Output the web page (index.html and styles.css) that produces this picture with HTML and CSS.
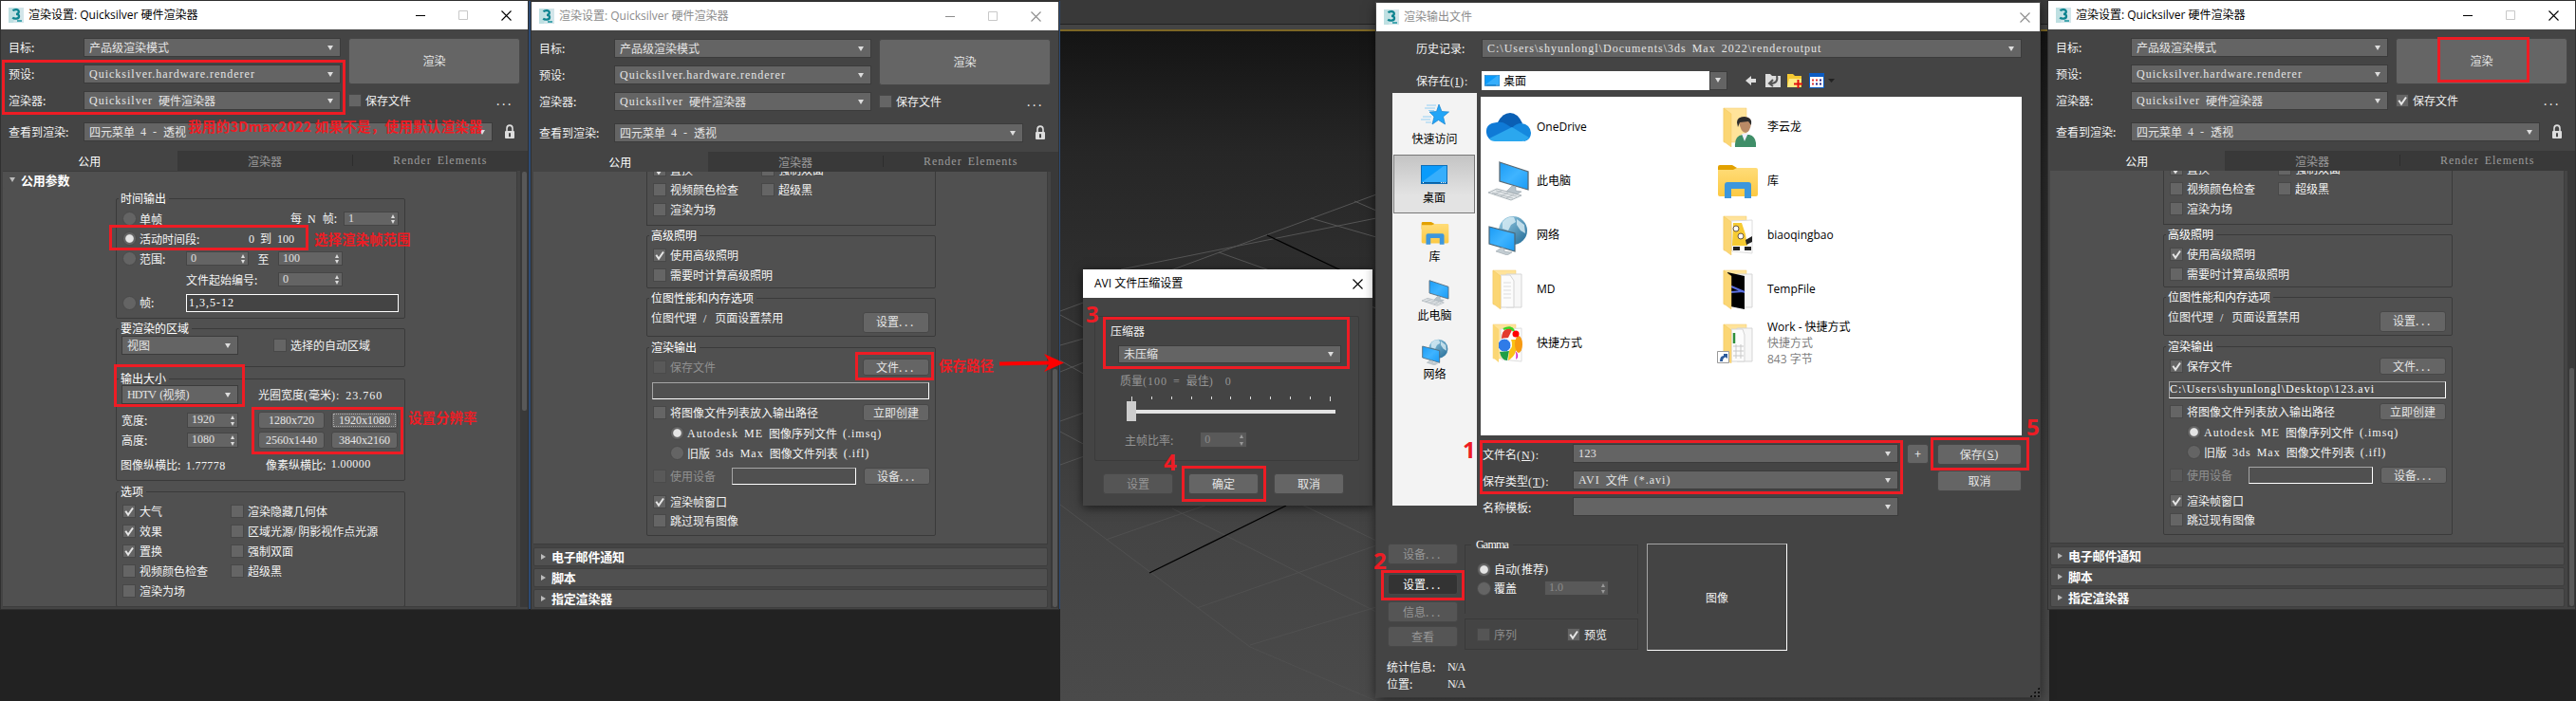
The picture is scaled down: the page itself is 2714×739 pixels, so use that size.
FILE: index.html
```html
<!DOCTYPE html>
<html lang="zh-CN">
<head>
<meta charset="utf-8">
<title>渲染设置</title>
<link rel="stylesheet" href="styles.css">
</head>
<body>
<svg class="defs" width="0" height="0" aria-hidden="true">
  <defs>
    <linearGradient id="scr" x1="0" y1="0" x2="1" y2="1"><stop offset="0" stop-color="#1a9bf5"/><stop offset=".5" stop-color="#3fb4ff"/><stop offset="1" stop-color="#1a9bf5"/></linearGradient>
    <linearGradient id="fold" x1="0" y1="0" x2="0" y2="1"><stop offset="0" stop-color="#ffdc78"/><stop offset="1" stop-color="#fcc943"/></linearGradient>
    <linearGradient id="globe" x1="0" y1="0" x2="1" y2="1"><stop offset="0" stop-color="#9fd0e6"/><stop offset="1" stop-color="#1f6a96"/></linearGradient>
    <symbol id="app" viewBox="0 0 16 16"><rect width="16" height="16" fill="#d3e6ea"/><path d="M0 0h9L5 16H0z" fill="#bfe0e2"/><path d="M4.5 3.2C6 1.6 10.6 1.4 10.8 4.2 10.9 6 9.300 6.700 8 6.800M8 6.800c2 .1 3.300 1 3 2.700-.3 2.600-5 2.500-6.800 1.100" fill="none" stroke="#0e8490" stroke-width="2.300"/><path d="M9 14h5" stroke="#19929c" stroke-width="1.500"/></symbol>
    <symbol id="lock" viewBox="0 0 12 16"><path d="M3 8V4.500a3 3.400 0 0 1 6 0V8" fill="none" stroke="#ddd" stroke-width="1.600"/><rect x="1" y="7" width="10" height="8" rx="1" fill="#ddd"/><path d="M6 9.200v4" stroke="#333" stroke-width="1.800"/></symbol>
    <symbol id="min" viewBox="0 0 10 10"><path d="M0 5.500h10" stroke="currentColor"/></symbol>
    <symbol id="max" viewBox="0 0 10 10"><path d="M.5.5h9v9h-9z" fill="none" stroke="#c8c8c8"/></symbol>
    <symbol id="close" viewBox="0 0 11 11"><path d="M.5.5l10 10M10.500.5l-10 10" stroke="currentColor" stroke-width="1.100"/></symbol>
    <symbol id="desktop" viewBox="0 0 28 20"><rect x=".5" y=".5" width="27" height="19" fill="#0a9bfb" stroke="#0f6fb8"/><path d="M1 18 24 1h3v17z" fill="#36aefc"/><path d="M1 18.500h26" stroke="#0a5f9f"/><path d="M2 18.500h1M21 18.500h5" stroke="#fff" stroke-dasharray="1 1"/></symbol>
    <symbol id="star" viewBox="0 0 30 24"><path d="m19 1 3 7.500 7.500.5-6 5 2 8-7-4.500L12 22l2-8-5-5 7.500-.5z" fill="#22a5f7" stroke="#1582d0" stroke-width=".7"/><path d="M6 2h10M4 5h11M8 7.500h6M2 14h9M0 17h10M5 20h6" stroke="#7cc6f5" stroke-width=".8"/></symbol>
    <symbol id="library" viewBox="0 0 44 36"><path d="M1 3q0-2 2-2h13l5 3v8H1z" fill="#e2a100"/><path d="M1 6h16l4-2h20q2 0 2 2v26q0 2-2 2H3q-2 0-2-2z" fill="url(#fold)"/><path d="M8 36V22q0-3 3-3h22q3 0 3 3v14h-7V26H15v10z" fill="#3d97dc"/></symbol>
    <symbol id="pc" viewBox="0 0 44 42"><path d="m13 1 30 10v19L13 21z" fill="url(#scr)" stroke="#596a76" stroke-width="1.300"/><path d="m26 26 4 1v4l6 1-5 3-11-3z" fill="#b9c4cb" stroke="#8a979f" stroke-width=".5"/><path d="m1 33 9-4 26 7-11 5z" fill="#e3e7e9" stroke="#9ba5ab" stroke-width=".8"/><path d="m5 33 22 6M9 31l22 6M7 35l8-4M14 37l8-4M20 39l8-4" stroke="#a7b0b6" stroke-width=".7"/></symbol>
    <symbol id="net" viewBox="0 0 42 42"><circle cx="26" cy="16" r="15" fill="url(#globe)"/><path d="M15 7q5-6 12-5l2 5-5 3-3 6-6-2zM30 4l8 6 1 9-5-3-4-6z" fill="#d9eef5" opacity=".8"/><path d="m1 12 27 7v19L1 30z" fill="url(#scr)" stroke="#4d6675" stroke-width="1.200"/><path d="m14 34 3 1v3l8 1-5 3-12-4z" fill="#c2ccd2" stroke="#8a979f" stroke-width=".5"/></symbol>
    <symbol id="cloud" viewBox="0 0 48 32"><path d="M13 11Q18 1 26 1t13 11L28 20z" fill="#0a5fb4"/><path d="M9 31A10 10 0 0 1 1 22Q0 12 12 11q6-1 10 2l8 5L6 30z" fill="#0f7ad6"/><path d="M28 17q4-5 10-5 9 1 10 10 0 7-7 9z" fill="#1488de"/><path d="m4 28 24-12 18 11q-3 4-8 4H10q-4 0-6-3z" fill="#2ba7ee"/></symbol>
    <symbol id="fback" viewBox="0 0 36 42"><path d="M2 1h24v36H2z" fill="#ffe39a" stroke="#f2cb6c" stroke-width=".5"/></symbol>
    <symbol id="ffront" viewBox="0 0 36 42"><path d="m2 1 8 6v35l-8-6z" fill="#fbd674" stroke="#f0c45c" stroke-width=".5"/></symbol>
    <symbol id="tick" viewBox="0 0 12 12"><path d="m2.300 5.800 2.700 4L10 2.500" fill="none" stroke="#e6e6e6" stroke-width="2"/></symbol>
  </defs>
</svg>

<main class="desktop">
  <svg class="viewport" width="1042" height="739" viewBox="0 0 1042 739">
    <g fill="none" stroke="#555" stroke-width="1">
      <path d="M0 328 333 205M64 284 333 230M0 364 28 356M0 392 25 382M0 444 28 434M0 490 28 480"/>
      <path d="M167 266 333 325M264 230 333 250M310 212 333 222M0 332 24 345M0 380 28 396M0 455 28 470"/>
      <path d="M48 569 190 520M144 641 333 575M200 680 333 640M0 532 200 682 333 739M118 536 333 645M230 520 333 570" stroke="#505050"/>
    </g>
    <path d="m218 248 80 38M94 604 238 533" stroke="#000" stroke-width="1.300"/>
  </svg>

  <!-- Window 1: common parameters -->
  <section class="win win-a">
    <header class="title"><svg class="app"><use href="#app"/></svg><h1>渲染设置: Quicksilver 硬件渲染器</h1><span class="ctl"><svg><use href="#min"/></svg><svg><use href="#max"/></svg><svg class="x"><use href="#close"/></svg></span></header>
    <div class="form">
      <label>目标:</label><div class="combo">产品级渲染模式</div><button class="btn render">渲染</button>
      <label>预设:</label><div class="combo en">Quicksilver.hardware.renderer</div>
      <label>渲染器:</label><div class="combo"><span class="en">Quicksilver&nbsp;</span>硬件渲染器</div><div class="save"><i class="box"></i>保存文件<span class="dots">...</span></div>
    </div>
    <div class="view"><label>查看到渲染:</label><div class="combo">四元菜单<span class="en">&nbsp;4&nbsp;-&nbsp;</span>透视</div><svg class="lock"><use href="#lock"/></svg></div>
    <nav class="tabs"><span class="on">公用</span><span>渲染器</span><span class="en">Render Elements</span></nav>
    <div class="content">
      <div class="panes">
        <div class="pane first">
          <div class="roll open"><b>公用参数</b><i class="grip"></i></div>
          <div class="group g-time">
            <h2>时间输出</h2>
            <div class="row"><i class="radio"></i>单帧<span class="push">每<span class="en"> N </span>帧:</span><div class="spin w57">1</div></div>
            <div class="row"><i class="radio sel"></i>活动时间段:<span class="push range"><span class="en">0 </span>到<span class="en"> 100</span></span></div>
            <div class="row"><span class="lead"><i class="radio"></i>范围:</span><div class="spin w66">0</div><span class="to">至</span><div class="spin w68">100</div></div>
            <div class="row r23"><span class="lead"></span><span class="start">文件起始编号:</span><div class="spin w68">0</div></div>
            <div class="row r26"><span class="lead"><i class="radio"></i>帧:</span><div class="input dark w224 en">1,3,5-12</div></div>
          </div>
          <div class="group g-area">
            <h2>要渲染的区域</h2>
            <div class="row r20"><div class="combo w123">视图</div><span class="auto"><i class="box"></i>选择的自动区域</span></div>
          </div>
          <div class="group g-size">
            <h2>输出大小</h2>
            <div class="row r20"><div class="combo w123"><span class="en caps">HDTV&nbsp;(</span>视频<span class="en">)</span></div><span class="gap21">光圈宽度<span class="en">(</span>毫米<span class="en">): 23.760</span></span></div>
            <div class="row r18 mt8"><span class="dim">宽度:</span><div class="spin w54">1920</div><button class="btn res gap21">1280x720</button><button class="btn res focus">1920x1080</button></div>
            <div class="row r18 mt3"><span class="dim">高度:</span><div class="spin w54">1080</div><button class="btn res gap21">2560x1440</button><button class="btn res">3840x2160</button></div>
            <div class="row r18 mt8"><span class="aspect">图像纵横比:<span class="en dig"> 1.77778</span></span><span class="pixel">像素纵横比:<span class="en dig up"> 1.00000</span></span></div>
          </div>
          <div class="group g-opt">
            <h2>选项</h2>
            <div class="row"><span class="col1"><i class="box"><svg><use href="#tick"/></svg></i>大气</span><i class="box"></i>渲染隐藏几何体</div>
            <div class="row"><span class="col1"><i class="box"><svg><use href="#tick"/></svg></i>效果</span><i class="box"></i>区域光源<span class="en slash">/</span>阴影视作点光源</div>
            <div class="row"><span class="col1"><i class="box"><svg><use href="#tick"/></svg></i>置换</span><i class="box"></i>强制双面</div>
            <div class="row"><span class="col1"><i class="box"></i>视频颜色检查</span><i class="box"></i>超级黑</div>
            <div class="row"><i class="box"></i>渲染为场</div>
          </div>
        </div>
      </div>
      <div class="scroll"><i class="thumb top"></i></div>
    </div>
  </section>

  <!-- Window 2: render output, inactive -->
  <section class="win win-b">
    <header class="title idle"><svg class="app"><use href="#app"/></svg><h1>渲染设置: Quicksilver 硬件渲染器</h1><span class="ctl"><svg><use href="#min"/></svg><svg><use href="#max"/></svg><svg class="x"><use href="#close"/></svg></span></header>
    <div class="form">
      <label>目标:</label><div class="combo">产品级渲染模式</div><button class="btn render">渲染</button>
      <label>预设:</label><div class="combo en">Quicksilver.hardware.renderer</div>
      <label>渲染器:</label><div class="combo"><span class="en">Quicksilver&nbsp;</span>硬件渲染器</div><div class="save"><i class="box"></i>保存文件<span class="dots">...</span></div>
    </div>
    <div class="view"><label>查看到渲染:</label><div class="combo">四元菜单<span class="en">&nbsp;4&nbsp;-&nbsp;</span>透视</div><svg class="lock"><use href="#lock"/></svg></div>
    <nav class="tabs"><span class="on">公用</span><span>渲染器</span><span class="en">Render Elements</span></nav>
    <div class="content">
      <div class="panes">
        <div class="pane">
          <div class="group g-cut">
            <div class="row"><span class="col1"><i class="box"><svg><use href="#tick"/></svg></i>置换</span><i class="box"></i>强制双面</div>
            <div class="row"><span class="col1"><i class="box"></i>视频颜色检查</span><i class="box"></i>超级黑</div>
            <div class="row"><i class="box"></i>渲染为场</div>
          </div>
          <div class="group g-light">
            <h2>高级照明</h2>
            <div class="row"><i class="box"><svg><use href="#tick"/></svg></i>使用高级照明</div>
            <div class="row"><i class="box"></i>需要时计算高级照明</div>
          </div>
          <div class="group g-bitmap">
            <h2>位图性能和内存选项</h2>
            <div class="row"><span class="raise">位图代理<span class="en slash"> / </span>页面设置禁用</span><button class="btn side h21">设置<span class="dd">...</span></button></div>
          </div>
          <div class="group g-out">
            <h2>渲染输出</h2>
            <div class="row r18 off"><i class="box"></i>保存文件<button class="btn side">文件<span class="dd">...</span></button></div>
            <div class="input path en"></div>
            <div class="row r18 mt5"><i class="box"></i>将图像文件列表放入输出路径<button class="btn side">立即创建</button></div>
            <div class="row sub mt2"><i class="radio sel"></i><span class="en">Autodesk ME&nbsp;</span>图像序列文件<span class="en">&nbsp;(.imsq)</span></div>
            <div class="row sub"><i class="radio"></i>旧版<span class="en">&nbsp;3ds Max&nbsp;</span>图像文件列表<span class="en">&nbsp;(.ifl)</span></div>
            <div class="row r18 mt5 off"><i class="box"></i>使用设备<div class="input dev"></div><button class="btn side shift">设备<span class="dd">...</span></button></div>
            <div class="row r20 mt8"><i class="box"><svg><use href="#tick"/></svg></i>渲染帧窗口</div>
            <div class="row r20"><i class="box"></i>跳过现有图像</div>
          </div>
        </div>
        <div class="roll"><b>电子邮件通知</b><i class="grip"></i></div>
        <div class="roll"><b>脚本</b><i class="grip"></i></div>
        <div class="roll"><b>指定渲染器</b><i class="grip"></i></div>
      </div>
      <div class="scroll"><i class="thumb low"></i></div>
    </div>
  </section>

  <!-- AVI compression dialog -->
  <section class="win avi">
    <header class="title"><h1>AVI 文件压缩设置</h1><span class="ctl"><svg class="x"><use href="#close"/></svg></span></header>
    <div class="avi-group">
      <p class="head">压缩器</p>
      <div class="combo">未压缩</div>
      <p class="quality">质量<span class="en">(100 = </span>最佳<span class="en">)&nbsp; 0</span></p>
      <div class="slider"><div class="ticks"><i></i><i></i><i></i><i></i><i></i><i></i><i></i><i></i><i></i><i></i><i></i></div><div class="track"><i></i></div></div>
      <div class="rate">主帧比率:<div class="spin off">0</div></div>
    </div>
    <footer><button class="btn off">设置</button><button class="btn">确定</button><button class="btn">取消</button></footer>
  </section>

  <!-- Output file dialog -->
  <section class="win file">
    <header class="title idle"><svg class="app"><use href="#app"/></svg><h1>渲染输出文件</h1><span class="ctl"><svg class="x"><use href="#close"/></svg></span></header>
    <div class="hist"><label>历史记录:</label><div class="combo en">C:\Users\shyunlongl\Documents\3ds Max 2022\renderoutput</div></div>
    <div class="look"><label>保存在<span class="en">(<u>I</u>):</span></label>
      <div class="where"><svg width="16" height="12" preserveAspectRatio="none"><use href="#desktop"/></svg>桌面</div><div class="drop"></div>
      <div class="tools">
        <svg width="12" height="12" viewBox="0 0 12 12"><path d="M0 6l6-5v3h5v4H6v3z" fill="#ddd"/></svg>
        <svg width="16" height="16" viewBox="0 0 16 16"><path d="M0 1h5l2 2h9v12H0z" fill="#ddd"/><path d="M12 3q2 8-7 8M8 7l-4 4 4 3" fill="none" stroke="#555" stroke-width="2"/></svg>
        <svg width="16" height="16" viewBox="0 0 16 16"><path d="M0 1h6l2 2h7v12H0z" fill="#f5c932"/><path d="M2 6h13l-1 9H0z" fill="#ffeb83"/><path d="M11.500 7v9M7 11.500h9" stroke="#e01010" stroke-width="2"/></svg>
        <svg width="16" height="16" viewBox="0 0 16 16"><rect width="16" height="16" fill="#0b5cc4"/><path d="M1 4h14v11H1z" fill="#fff"/><path d="M3 7.500h2M7 7.500h2M3 11.500h2" stroke="#d33" stroke-width="2"/><path d="M11 7.500h2M7 11.500h2M11 11.500h2" stroke="#228" stroke-width="2"/></svg>
        <svg class="caret" width="7" height="4" viewBox="0 0 7 4"><path d="M0 0h7L3.500 4z" fill="#222"/></svg>
      </div>
    </div>
    <div class="main">
      <aside class="places">
        <div><svg width="30" height="24"><use href="#star"/></svg>快速访问</div>
        <div class="on"><svg width="28" height="20"><use href="#desktop"/></svg>桌面</div>
        <div><svg width="30" height="25"><use href="#library"/></svg>库</div>
        <div><svg width="30" height="28"><use href="#pc"/></svg>此电脑</div>
        <div><svg width="28" height="28"><use href="#net"/></svg>网络</div>
      </aside>
      <div class="right">
        <div class="list">
          <div class="item"><span class="ic"><svg width="48" height="32"><use href="#cloud"/></svg></span>OneDrive</div>
          <div class="item"><span class="ic"><svg width="36" height="42" viewBox="0 0 36 42"><use href="#fback"/><use href="#ffront"/><path d="M14 42q-1-12 8-13h7q8 2 7 13z" fill="#3f8e68"/><path d="m21 28 3 8 4-9z" fill="#eef"/><path d="M18 15q0-5 6-5t7 6q-1 11-6 11t-7-12" fill="#b98a66"/><path d="M16 16q0-6 8-6 9 1 7 9l-3-4-9 1-2 5z" fill="#2b2b2b"/></svg></span>李云龙</div>
          <div class="item"><span class="ic"><svg width="44" height="42"><use href="#pc"/></svg></span>此电脑</div>
          <div class="item"><span class="ic"><svg class="lib" width="44" height="36"><use href="#library"/></svg></span>库</div>
          <div class="item"><span class="ic"><svg width="42" height="42"><use href="#net"/></svg></span>网络</div>
          <div class="item"><span class="ic"><svg width="36" height="42" viewBox="0 0 36 42"><use href="#fback"/><path d="M10 6l22-1v35l-21-2z" fill="#fff" stroke="#ddd"/><path d="M12 8h9l4 12 2 12H11z" fill="#f6cb33"/><circle cx="15" cy="14" r="3" fill="#fff" stroke="#654"/><circle cx="20" cy="22" r="3" fill="#fff" stroke="#654"/><path d="M25 26l7-4v6l-6 3zM12 33h7v4h-7zM24 33h7v4h-7z" fill="#222"/><use href="#ffront"/></svg></span>biaoqingbao</div>
          <div class="item"><span class="ic"><svg width="36" height="42" viewBox="0 0 36 42"><use href="#fback"/><path d="M16 5h16v35H16z" fill="#f7f7f7" stroke="#d5d5d5"/><path d="M10 6h10l4 6v28H10z" fill="#fcfcfc" stroke="#d5d5d5"/><path d="M13 14h8M13 18h8M13 22h8M13 26h8M13 30h8" stroke="#ddd"/><use href="#ffront"/></svg></span>MD</div>
          <div class="item"><span class="ic"><svg width="36" height="42" viewBox="0 0 36 42"><use href="#fback"/><path d="M16 5h16v35H16z" fill="#f7f7f7" stroke="#d5d5d5"/><path d="M6 3l18 4v35L9 39z" fill="#000"/><path d="M10 18l14 6M9 24l14-1" stroke="#5a6fe0" stroke-width="2"/><use href="#ffront"/></svg></span>TempFile</div>
          <div class="item"><span class="ic"><svg width="36" height="42" viewBox="0 0 36 42"><use href="#fback"/><path d="M10 6l22-1v35l-21-2z" fill="#fff" stroke="#ddd"/><path d="M11 16q0-12 12-11l-5 10z" fill="#e33b2e"/><circle cx="14" cy="23" r="7" fill="#2f7be8" stroke="#fff"/><path d="M9 30q2 9 8 9l2-10z" fill="#1e9e46"/><path d="M19 29q5-5 2-12h5q3 16-8 22z" fill="#fbc116"/><ellipse cx="29" cy="22" rx="4" ry="9" fill="#f79a12"/><circle cx="26" cy="11" r="3.500" fill="#f00"/><path d="M26 38q1-7-1-9 4 2 3 7z" fill="#d432c8"/><path d="M13 6q8-4 11 2" fill="none" stroke="#3bd322" stroke-width="2.500"/><path d="m2 1 6 5v35l-6-5z" fill="#fbd674"/></svg></span>快捷方式</div>
          <div class="item"><span class="ic"><svg width="36" height="42" viewBox="0 0 36 42"><use href="#fback"/><path d="M16 5h16v35H16z" fill="#f7f7f7" stroke="#d5d5d5"/><path d="M10 6h12l2 6v28H10z" fill="#fcfcfc" stroke="#d5d5d5"/><path d="M13 10v11" stroke="#2f8f3a" stroke-width="2.500"/><path d="M12 24h11M12 29h11M12 34h11M15 22v15M20 22v15" stroke="#c8c8c8"/><use href="#ffront"/></svg><svg class="link" width="13" height="13" viewBox="0 0 13 13"><path d="M.5.5h12v12H.5z" fill="#fff" stroke="#999"/><path d="M3 11q0-6 4-6V3h4v5L9 6.500Q6 7 6 11z" fill="#2c5b9c"/></svg></span><span class="work">Work - 快捷方式<small>快捷方式</small><small>843 字节</small></span></div>
        </div>
        <div class="names">
          <label>文件名<span class="en">(<u>N</u>):</span></label><div class="combo en dig">123</div><button class="btn plus">+</button><button class="btn">保存<span class="en">(<u>S</u>)</span></button>
          <label>保存类型<span class="en">(<u>T</u>):</span></label><div class="combo"><span class="en">AVI&nbsp;</span>文件<span class="en">&nbsp;(*.avi)</span></div><span></span><button class="btn">取消</button>
          <label>名称模板:</label><div class="combo"></div>
        </div>
      </div>
    </div>
    <div class="bottom">
      <div class="stack"><button class="btn off">设备<span class="dd">...</span></button><button class="btn pressed">设置<span class="dd">...</span></button><button class="btn off">信息<span class="dd">...</span></button><button class="btn off">查看</button></div>
      <div class="gam">
        <div class="gamma"><h2 class="en">Gamma</h2>
          <div class="row"><i class="radio sel"></i>自动<span class="en">(</span>推荐<span class="en">)</span></div>
          <div class="row"><i class="radio"></i>覆盖<div class="spin off">1.0</div></div>
        </div>
        <div class="seq"><span class="off"><i class="box"></i>序列</span><span><i class="box"><svg><use href="#tick"/></svg></i>预览</span></div>
      </div>
      <div class="preview">图像</div>
    </div>
    <dl class="stats"><dt>统计信息:</dt><dd class="en caps">N/A</dd><dt>位置:</dt><dd class="en caps">N/A</dd></dl>
    <i class="sizer"></i>
  </section>

  <!-- Window 3: render output with file chosen -->
  <section class="win win-c">
    <header class="title"><svg class="app"><use href="#app"/></svg><h1>渲染设置: Quicksilver 硬件渲染器</h1><span class="ctl"><svg><use href="#min"/></svg><svg><use href="#max"/></svg><svg class="x"><use href="#close"/></svg></span></header>
    <div class="form">
      <label>目标:</label><div class="combo">产品级渲染模式</div><button class="btn render">渲染</button>
      <label>预设:</label><div class="combo en">Quicksilver.hardware.renderer</div>
      <label>渲染器:</label><div class="combo"><span class="en">Quicksilver&nbsp;</span>硬件渲染器</div><div class="save"><i class="box"><svg><use href="#tick"/></svg></i>保存文件<span class="dots">...</span></div>
    </div>
    <div class="view"><label>查看到渲染:</label><div class="combo">四元菜单<span class="en">&nbsp;4&nbsp;-&nbsp;</span>透视</div><svg class="lock"><use href="#lock"/></svg></div>
    <nav class="tabs"><span class="on">公用</span><span>渲染器</span><span class="en">Render Elements</span></nav>
    <div class="content">
      <div class="panes">
        <div class="pane">
          <div class="group g-cut">
            <div class="row"><span class="col1"><i class="box"><svg><use href="#tick"/></svg></i>置换</span><i class="box"></i>强制双面</div>
            <div class="row"><span class="col1"><i class="box"></i>视频颜色检查</span><i class="box"></i>超级黑</div>
            <div class="row"><i class="box"></i>渲染为场</div>
          </div>
          <div class="group g-light">
            <h2>高级照明</h2>
            <div class="row"><i class="box"><svg><use href="#tick"/></svg></i>使用高级照明</div>
            <div class="row"><i class="box"></i>需要时计算高级照明</div>
          </div>
          <div class="group g-bitmap">
            <h2>位图性能和内存选项</h2>
            <div class="row"><span class="raise">位图代理<span class="en slash"> / </span>页面设置禁用</span><button class="btn side h21">设置<span class="dd">...</span></button></div>
          </div>
          <div class="group g-out">
            <h2>渲染输出</h2>
            <div class="row r18"><i class="box"><svg><use href="#tick"/></svg></i>保存文件<button class="btn side">文件<span class="dd">...</span></button></div>
            <div class="input path en">C:\Users\shyunlongl\Desktop\123.avi</div>
            <div class="row r18 mt5"><i class="box"></i>将图像文件列表放入输出路径<button class="btn side">立即创建</button></div>
            <div class="row sub mt2"><i class="radio sel"></i><span class="en">Autodesk ME&nbsp;</span>图像序列文件<span class="en">&nbsp;(.imsq)</span></div>
            <div class="row sub"><i class="radio"></i>旧版<span class="en">&nbsp;3ds Max&nbsp;</span>图像文件列表<span class="en">&nbsp;(.ifl)</span></div>
            <div class="row r18 mt5 off"><i class="box"></i>使用设备<div class="input dev"></div><button class="btn side shift">设备<span class="dd">...</span></button></div>
            <div class="row r20 mt8"><i class="box"><svg><use href="#tick"/></svg></i>渲染帧窗口</div>
            <div class="row r20"><i class="box"></i>跳过现有图像</div>
          </div>
        </div>
        <div class="roll"><b>电子邮件通知</b><i class="grip"></i></div>
        <div class="roll"><b>脚本</b><i class="grip"></i></div>
        <div class="roll"><b>指定渲染器</b><i class="grip"></i></div>
      </div>
      <div class="scroll"><i class="thumb low"></i></div>
    </div>
  </section>

  <!-- Annotations -->
  <i class="mark m1"></i><i class="mark m2"></i><i class="mark m3"></i><i class="mark m4"></i><i class="mark m5"></i>
  <i class="mark m6"></i><i class="mark m7"></i><i class="mark m8"></i><i class="mark m9"></i><i class="mark m10"></i><i class="mark m11"></i>
  <b class="note n1">我用的3Dmax2022 如果不是，使用默认渲染器</b>
  <b class="note n2">选择渲染帧范围</b>
  <b class="note n3">设置分辨率</b>
  <b class="note n4">保存路径</b>
  <b class="num k1">1</b><b class="num k2">2</b><b class="num k3">3</b><b class="num k4">4</b><b class="num k5">5</b>
  <svg class="arrow" width="68" height="20" viewBox="0 0 68 20"><path d="M0 8.500 52 7.500 47 0l21 9.500L47 19l5-7.500L0 12.500z" fill="#fe0000"/></svg>
</main>
</body>
</html>
```
FILE: styles.css
```css
* { box-sizing: border-box; }
body, h1, h2, p, dl, dd { margin: 0; }
body {
  width: 2714px; height: 739px; overflow: hidden; background: #222;
  font: 12px/14px "Noto Sans CJK SC", sans-serif; color: #f2f2f2;
}
i { font-style: normal; }
button { font: inherit; }
.defs { position: absolute; }
.desktop { position: relative; width: 2714px; height: 739px; overflow: hidden; background: linear-gradient(#333 1px, #2d4b74 1px 642px, #222 642px); }
.en { font-family: "Liberation Serif", serif; font-size: 12px; letter-spacing: 1px; word-spacing: 2px; white-space: pre; }
.dig { letter-spacing: .4px; }
.caps { letter-spacing: -.8px; }
.slash { letter-spacing: 2px; }
.dd { letter-spacing: 2.700px; }

.viewport {
  position: absolute; left: 1117px; top: 0;
  background: linear-gradient(#393939 25px, #222 25px 26px, #444 26px 31px, #7d6725 31px 33px, transparent 33px),
    linear-gradient(#141414 33px, #262626 160px, #363636 400px, #444 560px, #4a4a4a);
}

/* windows */
.win { position: absolute; display: flex; flex-direction: column; background: #444; overflow: hidden; }
.win-a { left: 1px; top: 1px; width: 555px; height: 641px; }
.win-b { left: 560px; top: 2px; width: 555px; height: 640px; }
.win-c { left: 2158px; top: 1px; width: 555px; height: 641px; }
.win-a, .win-b, .win-c { box-shadow: 0 0 0 1px #303030; }
.title { flex: none; display: flex; align-items: center; height: 30px; padding: 0 14px 0 8px; background: #fff; color: #000; }
.title .app { width: 16px; height: 16px; margin-right: 5px; }
.title h1 { font: 12px/16px "Open Sans", "Noto Sans CJK SC", sans-serif; }
.title.idle { color: #8c8c8c; }
.ctl { display: flex; align-items: center; gap: 35px; margin-left: auto; }
.ctl svg { width: 10px; height: 10px; }
.ctl svg.x { width: 11px; height: 11px; }
.win-a .title, .win-c .title { padding-right: 17px; }
.win-b .title { padding-right: 18px; }

.combo {
  position: relative; display: flex; align-items: center; height: 20px; padding: 0 5px 1px;
  background: #646464; border: 1px solid #3b3b3b; color: #e4e4e4; white-space: nowrap;
}
.combo::after, .drop::after {
  content: ""; position: absolute; right: 7px; top: 7px;
  border: 3px solid transparent; border-top: 5px solid #ddd; border-bottom: 0;
}
.combo.w123 { width: 123px; }
.btn {
  display: flex; align-items: center; justify-content: center; padding: 0 0 1px; height: 18px;
  background: #656565; border: 1px solid #474747; border-radius: 3px; color: #e6e6e6; white-space: pre;
}
.form { display: grid; grid-template-columns: 79px 271px 180px; grid-template-rows: 20px 20px 20px; row-gap: 8px; padding: 9px 0 0 8px; align-items: center; }
.render { grid-column: 3; grid-row: 1 / 3; width: 181px; height: 49px; margin-left: 8px; }
.save { display: flex; align-items: center; margin-left: 8px; width: 181px; }
.dots { margin-left: auto; margin-right: 7px; letter-spacing: 2.700px; }
.view { display: flex; align-items: center; height: 20px; margin: 13px 0 10px; padding-left: 8px; }
.view label { width: 79px; }
.view .combo { width: 431px; }
.lock { width: 12px; height: 16px; margin-left: 12px; }
.tabs { flex: none; display: flex; height: 21px; margin-left: 1px; background: #393939; color: #9c9c9c; }
.tabs span { width: 185px; text-align: center; line-height: 21px; }
.tabs span + span + span { background: linear-gradient(#2d2d2d, #2d2d2d) 0 4px / 1px 12px no-repeat; }
.tabs .on { background: #444; color: #fff; }

.content { display: flex; height: 460px; overflow: hidden; }
.panes { width: 543px; margin-left: 2px; }
.pane { height: 393px; background: #505050; border-right: 1px solid #3c3c3c; border-bottom: 1px solid #3c3c3c; overflow: hidden; }
.pane.first { height: 460px; border-top: 1px solid #3c3c3c; }
.scroll { width: 8px; margin-left: 3px; background: #393939; }
.thumb { display: block; width: 5px; margin-left: 2px; border-radius: 2px; background: #585858; }
.thumb.top { height: 252px; margin-top: 1px; }
.thumb.low { height: 251px; margin-top: 208px; }

.roll { position: relative; display: flex; align-items: center; height: 20px; margin-top: 2px; padding-left: 18px; background: #505050; border: 1px solid #3e3e3e; border-radius: 2px; }
.pane + .roll { margin-top: 3px; }
.roll b { font-size: 13px; font-weight: 700; color: #fff; letter-spacing: -.2px; }
.roll::before { content: ""; position: absolute; left: 7px; top: 6px; border: 3px solid transparent; border-left: 5px solid #bbb; border-right: 0; }
.roll.open { height: 18px; margin-top: 0; padding-left: 19px; border: 0; }
.roll.open::before { border: 3px solid transparent; border-top: 5px solid #bbb; border-bottom: 0; }
.grip { width: 6px; height: 6px; margin-left: auto; margin-right: 7px; background: radial-gradient(#999 35%, transparent 45%) 0 0 / 2px 2px; }

.group { position: relative; width: 305px; margin-left: 119px; border: 1px solid #3a3a3a; border-radius: 2px; padding-left: 6px; padding-right: 6px; }
.group h2, .gamma h2 { position: absolute; top: -8px; left: 2px; padding: 0 3px 0 2px; background: #505050; font-weight: 400; font-size: 12px; line-height: 14px; color: #fff; }
.g-time { height: 127px; margin-top: 10px; padding-top: 10px; }
.g-area { height: 41px; margin-top: 10px; padding: 7px 5px; }
.g-size { height: 108px; margin-top: 12px; padding: 6px 5px; }
.g-opt { height: 122px; margin-top: 11px; padding-top: 9px; }
.g-cut { display: flow-root; height: 57px; border-top: 0; border-radius: 0; }
.g-cut .row:first-child { margin-top: -13px; }
.g-light { height: 56px; margin-top: 10px; padding-top: 9px; }
.g-bitmap { height: 41px; margin-top: 10px; padding-top: 14px; padding-left: 4px; }
.g-out { height: 199px; margin-top: 11px; padding-top: 11px; }

.row { display: flex; align-items: center; height: 21px; white-space: nowrap; color: #f4f4f4; }
.r18 { height: 18px; } .r20 { height: 20px; } .r23 { height: 23px; } .r26 { height: 26px; }
.mt2 { margin-top: 2px; } .mt3 { margin-top: 3px; } .mt5 { margin-top: 5px; } .mt8 { margin-top: 8px; }
.sub { padding-left: 18px; }
.row.off { color: #909090; }
.row.off .box { background: #595959; border-color: #4b4b4b; }
.box { flex: none; display: inline-flex; width: 14px; height: 14px; margin-right: 4px; background: #656565; border: 1px solid #484848; }
.box svg { width: 12px; height: 12px; }
.radio { flex: none; width: 15px; height: 15px; margin-right: 3px; border-radius: 50%; background: #646464; border: 1px solid #4a4a4a; }
.radio.sel { background: radial-gradient(circle, #e4e4e4 3.800px, #646464 4.800px); }
.push { margin-left: auto; }
.spin {
  position: relative; height: 15px; padding: 0 4px; line-height: 13px; border: 1px solid #454545; background: #646464; color: #e0e0e0;
  font-family: "Liberation Serif", serif; font-size: 12px;
}
.spin::before, .spin::after { content: ""; position: absolute; right: 3px; border: 2.500px solid transparent; }
.spin::before { top: 2px; border-bottom: 4px solid #ddd; border-top: 0; }
.spin::after { bottom: 1px; border-top: 4px solid #ddd; border-bottom: 0; }
.spin.off { background: #595959; color: #8c8c8c; }
.spin.off::before { border-bottom-color: #999; } .spin.off::after { border-top-color: #999; }
.w57 { width: 58px; margin-left: 7px; } .w66 { width: 66px; } .w68 { width: 68px; } .w54 { width: 54px; height: 16px; }
.lead { display: flex; align-items: center; width: 67px; }
.to { width: 31px; text-align: center; }
.start { width: 97px; }
.range { margin-right: 110px; }
.range .en { letter-spacing: 0; word-spacing: 3px; }
.input { height: 19px; padding: 0 2px; line-height: 14px; border: 1px solid; border-color: #a5a5a5 #fff #fff #a5a5a5; color: #fff; }
.input.dark { background: #444; border-color: #fff; padding-top: 1px; }
.w224 { width: 224px; }
.path { width: 292px; margin: 7px 0 0 -1px; height: 18px; padding: 0; }
.dev { width: 131px; height: 18px; margin-left: 17px; }
.side { width: 70px; margin-left: auto; margin-right: 0; }
.side.shift { margin-right: -1px; }
.side.h21 { height: 22px; }
.raise { margin-top: -9px; }
.auto { display: flex; align-items: center; margin-left: 37px; }
.gap21 { margin-left: 21px; }
.dim { width: 69px; }
.res { width: 70px; font-family: "Liberation Serif", serif; }
.res + .res { margin-left: 7px; }
.focus { outline: 1px dotted #aaa; outline-offset: -3px; }
.aspect { width: 153px; margin-left: -1px; }
.up { position: relative; top: -2px; }
.col1 { display: flex; align-items: center; width: 114px; }

/* AVI compression dialog */
.avi { left: 1141px; top: 284px; width: 305px; height: 249px; box-shadow: 0 2px 10px rgba(0,0,0,.6); }
.avi .title { padding: 0 10px 0 12px; }
.avi-group { height: 153px; width: 279px; margin: 19px 0 0 12px; padding: 7px 19px 0 17px; border: 1px solid #3a3a3a; border-radius: 2px; }
.head { line-height: 16px; margin-left: -1px; }
.avi-group .combo { width: 235px; height: 19px; margin: 7px 0 0 7px; }
.avi-group .combo::after { top: 6px; }
.quality { margin: 11px 0 0 9px; color: #949494; }
.slider { margin: 9px 0 0 16px; width: 220px; height: 26px; }
.ticks { display: flex; justify-content: space-between; width: 210px; height: 5px; margin-left: 5px; }
.ticks i { width: 1px; height: 3px; background: #ddd; }
.ticks i:first-child, .ticks i:last-child { height: 5px; }
.track { height: 21px; background: linear-gradient(#e4e4e4, #e4e4e4) 0 9px / 220px 4px no-repeat; }
.track i { display: block; width: 10px; height: 21px; background: #cdcdcd; }
.rate { display: flex; align-items: center; height: 17px; margin: 11px 0 0 14px; color: #949494; }
.rate .spin { width: 50px; height: 17px; margin-left: 28px; line-height: 15px; }
.avi footer { display: flex; gap: 16px; margin: 13px 0 0 21px; }
.avi .btn { width: 74px; height: 22px; }
.btn.off { background: #555; color: #969696; }

/* output file dialog */
.file { left: 1450px; top: 3px; width: 699px; height: 732px; box-shadow: 0 2px 12px rgba(0,0,0,.6), 0 0 0 1px #555; }
.file .title { padding-right: 10px; }
.hist { display: flex; align-items: center; margin: 8px 0 0 42px; height: 20px; }
.hist label, .look label { width: 69px; }
.hist .combo { width: 569px; }
.look { display: flex; align-items: center; height: 20px; margin: 14px 0 0 42px; }
.where { display: flex; align-items: center; gap: 4px; width: 240px; height: 20px; padding-left: 3px; background: #fff; color: #000; }
.drop { position: relative; width: 19px; height: 20px; background: #646464; border: 1px solid #3b3b3b; }
.drop::after { right: 6px; top: 6px; }
.tools { display: flex; align-items: center; gap: 7px; margin-left: 19px; }
.tools svg:first-child { margin-right: 2px; }
.tools .caret { margin-left: -3px; }
.main { display: flex; margin: 3px 0 0 17px; height: 435px; }
.places { width: 89px; padding-top: 3px; background: #f3f3f3; color: #000; }
.places div { display: flex; flex-direction: column; align-items: center; justify-content: space-between; height: 62px; padding: 7px 0 9px; border: 1px solid transparent; }
.places .on { width: 86px; margin-left: 1px; padding-top: 10px; background: linear-gradient(#c4c4c4, #e3e3e3 70%); border-color: #777; }
.right { width: 570px; margin-left: 4px; padding-top: 4px; }
.list { display: grid; grid-template-columns: 243px 243px; grid-auto-rows: 57px; height: 357px; padding: 3px 0 0 5px; background: #fff; color: #000; font-family: "Open Sans", "Noto Sans CJK SC", sans-serif; align-content: start; }
.item { display: flex; align-items: center; }
.ic { position: relative; display: flex; justify-content: center; width: 48px; margin-right: 6px; }
.lib { margin-left: -3px; }
.link { position: absolute; left: 1px; bottom: 0; }
.work { display: flex; flex-direction: column; line-height: 17px; }
.work small { font-size: 12px; color: #7e7e7e; }
.names { display: grid; grid-template-columns: 95px 343px 24px 88px; grid-auto-rows: 28px; padding: 9px 0 0 2px; white-space: nowrap; }
.names .plus { width: 23px; margin-left: 9px; height: 21px; }
.names label { line-height: 22px; }
.names .btn:not(.plus) { grid-column: 4; width: 89px; height: 22px; margin-left: 17px; }
.bottom { display: flex; margin: 40px 0 0 12px; height: 113px; }
.stack { width: 74px; }
.stack .btn { width: 74px; height: 22px; margin-bottom: 10px; }
.stack .btn:nth-child(2) { margin-bottom: 7px; }
.stack .btn:nth-child(3) { margin-bottom: 4px; }
.btn.pressed { background: #333; color: #fff; }
.gam { width: 183px; margin-left: 7px; }
.gamma { position: relative; height: 73px; margin-top: 1px; padding: 15px 0 0 12px; border: 1px solid #3a3a3a; border-bottom: 0; }
.gamma h2 { left: 6px; padding: 0 5px; background: #444; letter-spacing: -.8px; }
.gamma .row { height: 20px; }
.gamma .spin { width: 68px; height: 16px; margin-left: 29px; }
.seq { display: flex; align-items: center; gap: 53px; height: 33px; margin-top: 5px; padding-left: 12px; border: 1px solid #3a3a3a; }
.seq > span { display: flex; align-items: center; }
.seq .off { color: #8c8c8c; }
.seq .off .box { background: #555; }
.preview { display: flex; align-items: center; justify-content: center; width: 148px; height: 113px; margin-left: 9px; border: 1px solid; border-color: #a5a5a5 #fff #fff #a5a5a5; }
.stats { display: grid; grid-template-columns: 64px 60px; grid-auto-rows: 18px; margin: 8px 0 0 11px; align-items: center; }
.sizer { position: absolute; right: 0; bottom: 0; width: 11px; height: 11px; background: radial-gradient(#111 45%, transparent 50%) 0 0 / 4px 4px; clip-path: polygon(100% 0, 100% 100%, 0 100%); }

/* annotations */
.mark { position: absolute; border: 3px solid #ee1c24; }
.m1 { left: 2px; top: 63px; width: 362px; height: 58px; }
.m2 { left: 115px; top: 237px; width: 210px; height: 27px; }
.m3 { left: 120px; top: 384px; width: 138px; height: 45px; }
.m4 { left: 265px; top: 429px; width: 160px; height: 50px; }
.m5 { left: 901px; top: 371px; width: 83px; height: 30px; }
.m6 { left: 1162px; top: 334px; width: 260px; height: 55px; }
.m7 { left: 1245px; top: 491px; width: 89px; height: 38px; }
.m8 { left: 1559px; top: 464px; width: 446px; height: 57px; }
.m9 { left: 2034px; top: 461px; width: 104px; height: 35px; }
.m10 { left: 1455px; top: 601px; width: 88px; height: 32px; }
.m11 { left: 2568px; top: 39px; width: 97px; height: 48px; }
.note { position: absolute; color: #ee1c24; font-size: 14.500px; line-height: 18px; white-space: nowrap; }
.n1 { left: 198px; top: 124px; letter-spacing: .25px; }
.n2 { left: 331px; top: 243px; }
.n3 { left: 430px; top: 431px; }
.n4 { left: 989px; top: 376px; }
.num { position: absolute; color: #ee1c24; font: 700 24px/24px "Noto Sans", sans-serif; }
.k1 { left: 1541px; top: 462px; }
.k2 { left: 1447px; top: 579px; }
.k3 { left: 1144px; top: 319px; }
.k4 { left: 1226px; top: 475px; }
.k5 { left: 2135px; top: 438px; }
.arrow { position: absolute; left: 1053px; top: 373px; }
```
